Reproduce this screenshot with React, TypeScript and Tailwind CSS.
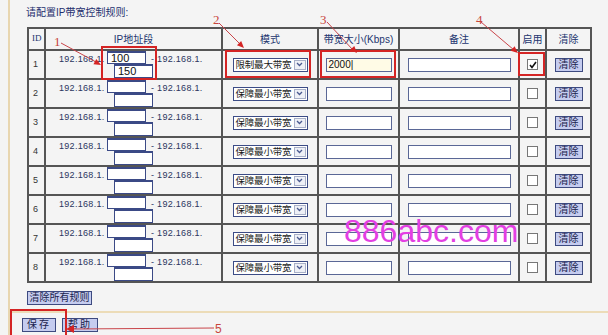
import React from 'react';

const FONT = "font-['Liberation_Sans','Noto_Sans_CJK_SC',sans-serif]";

const rows = [1, 2, 3, 4, 5, 6, 7, 8];

function arrowHead(x1: number, y1: number, x2: number, y2: number, len = 7, half = 3) {
  const dx = x2 - x1;
  const dy = y2 - y1;
  const d = Math.sqrt(dx * dx + dy * dy);
  const ux = dx / d;
  const uy = dy / d;
  const bx = x2 - ux * len;
  const by = y2 - uy * len;
  const px = -uy * half;
  const py = ux * half;
  return `${x2},${y2} ${bx + px},${by + py} ${bx - px},${by - py}`;
}

function Select({ label }: { label: string }) {
  return (
    <div className="mx-auto flex h-[14px] w-[75px] items-stretch border border-[#3c4c86] bg-white">
      <span className="flex-1 pl-[2px] text-[9.5px] leading-[12px] tracking-[-0.2px] text-[#1a1a1a] whitespace-nowrap">{label}</span>
      <span className="m-[1px] flex w-[12px] items-center justify-center border border-[#a8b0c8] bg-[#eef0f6]">
        <svg width="7" height="5" viewBox="0 0 7 5">
          <path d="M1 1 L3.5 3.5 L6 1" stroke="#4a5a90" strokeWidth="1.3" fill="none" />
        </svg>
      </span>
    </div>
  );
}

function SmallButton({ children, className = '' }: { children: React.ReactNode; className?: string }) {
  return (
    <div className={`flex h-[14px] items-center justify-center border border-[#3d4a80] bg-[#c5ccef] text-[10px] leading-[12px] text-[#1b1f4d] ${className}`}>
      {children}
    </div>
  );
}

export default function App() {
  return (
    <div className={`relative h-[335px] w-[608px] overflow-hidden bg-[#f4f4f4] ${FONT}`}>
      <div className="ml-[8px] flex h-full flex-col border-l-2 border-[#e8d6b0]">
        <div className="h-[27px] pl-[16px] pt-[6px] text-[10px] leading-[13px] text-[#1e2f6e]">请配置IP带宽控制规则:</div>

        <div className="pl-[17px]">
          <table className="w-[563px] table-fixed border-collapse text-[10px] text-[#23346f]">
            <colgroup>
              <col className="w-[17px]" />
              <col className="w-[177px]" />
              <col className="w-[96px]" />
              <col className="w-[81px]" />
              <col className="w-[120px]" />
              <col className="w-[27px]" />
              <col className="w-[45px]" />
            </colgroup>
            <thead>
              <tr className="h-[22px]">
                <th className="border-2 border-[#555] pl-[3px] text-left font-normal font-['Liberation_Serif',serif] text-[9px]">ID</th>
                <th className="border-2 border-[#555] font-normal">IP地址段</th>
                <th className="border-2 border-[#555] font-normal">模式</th>
                <th className="border-2 border-[#555] font-normal whitespace-nowrap">带宽大小(Kbps)</th>
                <th className="border-2 border-[#555] font-normal">备注</th>
                <th className="border-2 border-[#555] font-normal">启用</th>
                <th className="border-2 border-[#555] font-normal">清除</th>
              </tr>
            </thead>
            <tbody>
              {rows.map((r) => (
                <tr key={r} className="h-[29px]">
                  <td className="border-2 border-[#555] pl-[4px] text-[9px] text-[#333]">{r}</td>
                  <td className="border-2 border-[#555] p-0 align-top">
                    <div className="flex items-start pl-[13px] text-[9px] text-[#2b3560]">
                      <span className="w-[48px] pt-[3px] leading-[11px] tracking-[0.3px]">192.168.1.</span>
                      <div className="flex w-[44px] flex-col">
                        <div className="h-[13px] w-[39px] border border-t-2 border-[#3b4a86] bg-white pl-[3px] text-[11px] leading-[10px] text-[#111]">
                          {r === 1 ? '100' : ''}
                        </div>
                        <div className="ml-[7px] h-[14px] w-[39px] border border-t-2 border-[#3b4a86] bg-white pl-[3px] text-[11px] leading-[11px] text-[#111]">
                          {r === 1 ? '150' : ''}
                        </div>
                      </div>
                      <span className="pt-[3px] leading-[11px] tracking-[0.3px] whitespace-nowrap">- 192.168.1.</span>
                    </div>
                  </td>
                  <td className="border-2 border-[#555]">
                    <Select label={r === 1 ? '限制最大带宽' : '保障最小带宽'} />
                  </td>
                  <td className="border-2 border-[#555]">
                    <div className={`mx-auto h-[14px] w-[66px] border border-[#5a6796] pl-[2px] text-[10px] leading-[12px] text-[#111] ${r === 1 ? 'bg-[#fffbe6]' : 'bg-white'}`}>
                      {r === 1 ? '2000|' : ''}
                    </div>
                  </td>
                  <td className="border-2 border-[#555]">
                    <div className="mx-auto h-[14px] w-[103px] border border-[#5a6796] bg-white" />
                  </td>
                  <td className="border-2 border-[#555]">
                    <div className="mx-auto flex h-[11px] w-[11px] items-center justify-center border border-[#777] bg-white">
                      {r === 1 && (
                        <svg width="8" height="8" viewBox="0 0 8 8">
                          <path d="M1 4 L3 6.5 L7 1" stroke="#111" strokeWidth="1.6" fill="none" />
                        </svg>
                      )}
                    </div>
                  </td>
                  <td className="border-2 border-[#555]">
                    <SmallButton className="mx-auto w-[28px]">清除</SmallButton>
                  </td>
                </tr>
              ))}
            </tbody>
          </table>
        </div>

        <div className="mt-[8px] flex pl-[17px]">
          <SmallButton className="w-[65px]">清除所有规则</SmallButton>
        </div>

        <div className="mt-[6px] flex gap-[6px] border-t-2 border-[#ecdcb8] pl-[12px] pt-[5px]">
          <SmallButton className="w-[34px] tracking-[2px]">保存</SmallButton>
          <SmallButton className="w-[36px] tracking-[2px]">帮助</SmallButton>
        </div>
      </div>

      <div className="absolute left-[344px] top-[213px] font-['Liberation_Sans',sans-serif] text-[32px] leading-[36px] text-[#e33fe3]">
        886abc.com
      </div>

      <svg className="pointer-events-none absolute inset-0" width="608" height="335" viewBox="0 0 608 335">
        <g fill="none" stroke="#d42424" strokeWidth="2">
          <rect x="102" y="47" width="54" height="32" />
          <rect x="226" y="51" width="84" height="26" />
          <rect x="321" y="51" width="74" height="26" />
          <rect x="519" y="53" width="25" height="22" />
          <rect x="11" y="310" width="55" height="30" />
        </g>
        <g stroke="#c9454a" strokeWidth="1">
          <line x1="61" y1="43" x2="96" y2="62" />
          <line x1="219" y1="23" x2="240" y2="44" />
          <line x1="327" y1="22" x2="353" y2="50" />
          <line x1="481" y1="22" x2="514" y2="50" />
          <line x1="214" y1="328" x2="72" y2="329" />
        </g>
        <g fill="#d42424">
          <polygon points={arrowHead(61, 43, 101, 65)} />
          <polygon points={arrowHead(219, 23, 244, 48)} />
          <polygon points={arrowHead(327, 22, 357, 53)} />
          <polygon points={arrowHead(481, 22, 518, 53)} />
          <polygon points={arrowHead(214, 328, 66, 329, 8, 4)} />
        </g>
        <g fill="#c8463c" fontFamily="'Liberation Serif', serif" fontSize="13">
          <text x="54" y="46">1</text>
          <text x="213" y="24">2</text>
          <text x="320" y="24">3</text>
          <text x="476" y="24">4</text>
        </g>
        <text x="215" y="333" fill="#c8463c" fontFamily="'Liberation Sans', sans-serif" fontSize="12">5</text>
      </svg>
    </div>
  );
}
